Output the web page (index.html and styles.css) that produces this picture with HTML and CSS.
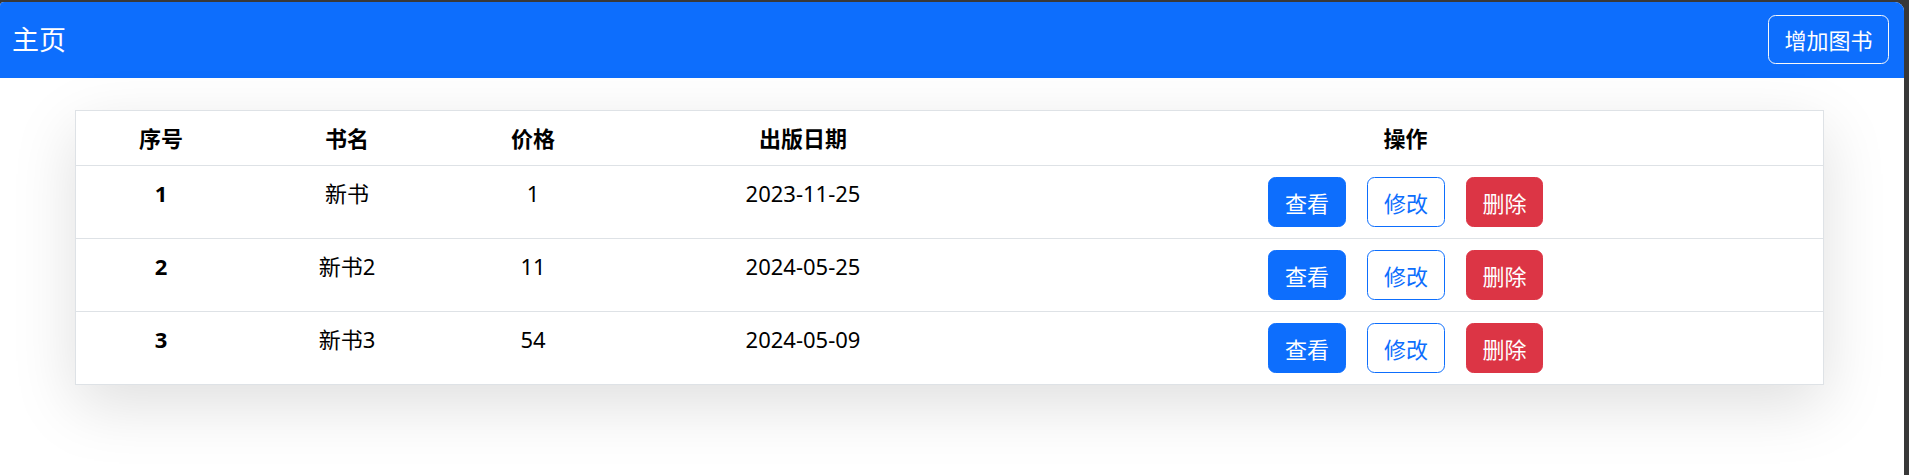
FILE: index.html
```html
<!DOCTYPE html>
<html lang="zh-CN">
<head>
<meta charset="utf-8">
<title>主页</title>
<link rel="stylesheet" href="styles.css">
</head>
<body>
<div class="window">
  <nav class="navbar">
    <span class="brand">主页</span>
    <button class="btn btn-outline-light">增加图书</button>
  </nav>
  <main class="content">
    <div class="card">
      <table class="table">
        <colgroup>
          <col class="c1"><col class="c2"><col class="c3"><col class="c4"><col>
        </colgroup>
        <thead>
          <tr><th>序号</th><th>书名</th><th>价格</th><th>出版日期</th><th>操作</th></tr>
        </thead>
        <tbody>
          <tr>
            <th>1</th><td>新书</td><td>1</td><td>2023-11-25</td>
            <td class="actions"><div class="btns"><button class="btn btn-primary">查看</button><button class="btn btn-outline-primary">修改</button><button class="btn btn-danger">删除</button></div></td>
          </tr>
          <tr>
            <th>2</th><td>新书2</td><td>11</td><td>2024-05-25</td>
            <td class="actions"><div class="btns"><button class="btn btn-primary">查看</button><button class="btn btn-outline-primary">修改</button><button class="btn btn-danger">删除</button></div></td>
          </tr>
          <tr>
            <th>3</th><td>新书3</td><td>54</td><td>2024-05-09</td>
            <td class="actions"><div class="btns"><button class="btn btn-primary">查看</button><button class="btn btn-outline-primary">修改</button><button class="btn btn-danger">删除</button></div></td>
          </tr>
        </tbody>
      </table>
    </div>
  </main>
</div>
</body>
</html>
```

FILE: styles.css
```css
html, body {
  margin: 0;
  padding: 0;
  height: 100%;
}
body {
  background: #383838;
  font-family: "Noto Sans", "Noto Sans CJK SC", sans-serif;
  font-size: 22px;
  line-height: 33px;
  color: #212529;
}
.window {
  margin: 2px 5px 0 0;
  height: calc(100% - 2px);
  background: #fff;
  border-radius: 4px 9px 0 0;
  overflow: hidden;
}
.navbar {
  height: 76px;
  background: #0d6efd;
  display: flex;
  align-items: center;
  justify-content: space-between;
  padding: 0 15px 0 12px;
  box-sizing: border-box;
}
.brand {
  color: #fff;
  font-size: 27px;
  line-height: 40px;
  font-family: "Noto Sans CJK SC", sans-serif;
  margin-top: -2px;
}
.btn {
  font-family: "Noto Sans CJK SC", sans-serif;
  font-size: 22px;
  line-height: 33px;
  border: 1px solid transparent;
  border-radius: 7.5px;
  background: transparent;
  padding: 0;
  display: inline-flex;
  align-items: center;
  justify-content: center;
  box-sizing: border-box;
  cursor: pointer;
}
.btn-outline-light {
  color: #fff;
  border-color: #f8f9fa;
  width: 121px;
  height: 49px;
  margin-top: -2px;
}
.content {
  padding: 32px 0 0 75px;
}
.card {
  width: 1749px;
  box-sizing: border-box;
  border: 1px solid #dee2e6;
  background: #fff;
  box-shadow: 0 20px 60px rgba(0, 0, 0, 0.13);
}
.table {
  width: 100%;
  border-collapse: collapse;
  table-layout: fixed;
  color: #000;
}
.c1 { width: 170px; }
.c2 { width: 202px; }
.c3 { width: 170px; }
.c4 { width: 370px; }
.table th, .table td {
  text-align: center;
  padding: 11px 8px;
  vertical-align: top;
  border-bottom: 1px solid #dee2e6;
}
.table tbody tr:last-child th,
.table tbody tr:last-child td {
  border-bottom: none;
}
.table thead th {
  padding: 11px 8px 10px;
  font-weight: 700;
  vertical-align: middle;
}
.table tbody th {
  font-weight: 700;
}
.btns {
  display: flex;
  justify-content: center;
  gap: 21px;
}
.btns .btn {
  width: 78px;
  height: 50px;
}
.btns .btn-danger { width: 77px; }
.btn-primary {
  background: #0d6efd;
  border-color: #0d6efd;
  color: #fff;
}
.btn-outline-primary {
  color: #0d6efd;
  border-color: #0d6efd;
  background: #fff;
}
.btn-danger {
  background: #dc3545;
  border-color: #dc3545;
  color: #fff;
}
```
